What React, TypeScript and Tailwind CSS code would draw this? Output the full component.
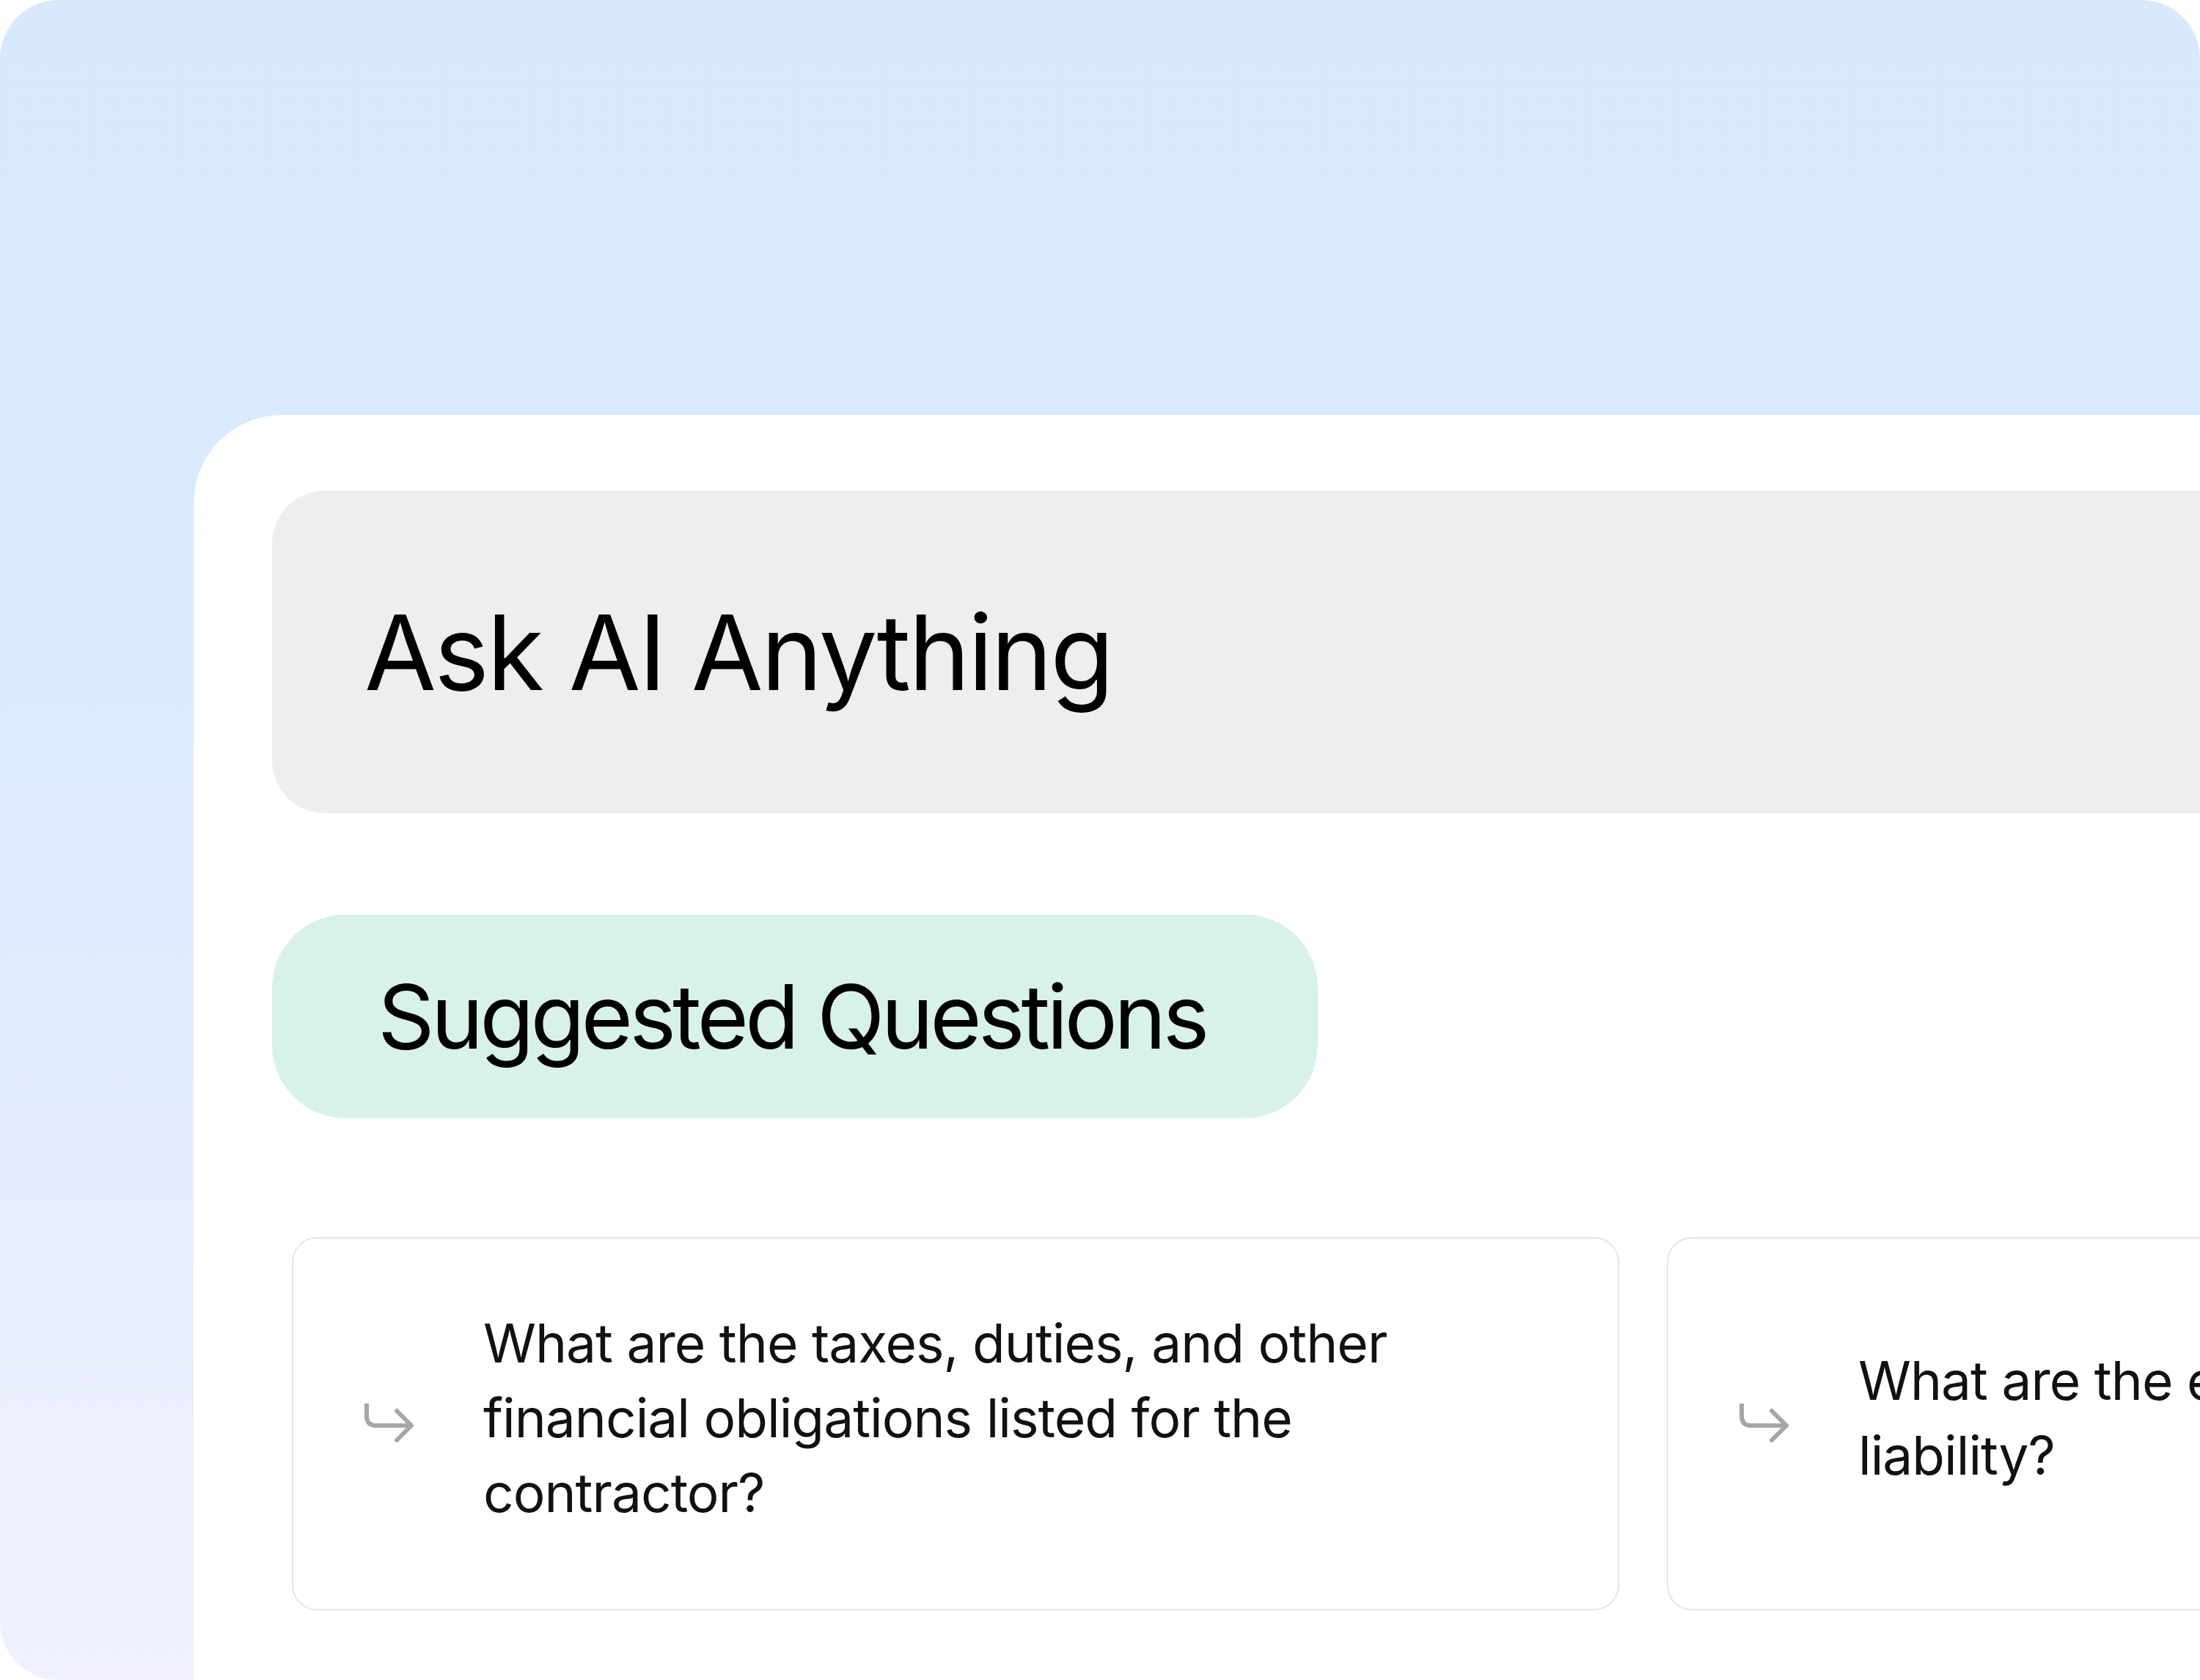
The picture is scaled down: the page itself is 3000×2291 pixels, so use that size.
import type { ReactNode } from "react";

const ReplyArrow = () => (
  <svg
    viewBox="0 0 70 56"
    className="w-[70px] h-[56px] shrink-0"
    fill="none"
    stroke="#a6a6a6"
    strokeWidth={6}
    strokeLinecap="round"
    strokeLinejoin="round"
  >
    <path d="M5 1 V17 Q5 30 18 30 H65" />
    <path d="M46 10 L66 30 L46 50" />
  </svg>
);

const QuestionCard = ({ children }: { children: ReactNode }) => (
  <div className="w-[1810px] h-[509px] shrink-0 rounded-[34px] border-2 border-[#e6e6e8] bg-white flex items-center pl-[95px] pr-[80px]">
    <ReplyArrow />
    <p className="ml-[94px] pb-[16px] max-w-[1400px] text-[73px] leading-[102px] tracking-[-1px] text-[#111111]">
      {children}
    </p>
  </div>
);

export default function App() {
  return (
    <div className="w-[3000px] h-[2291px] bg-white font-['Inter',sans-serif]">
      <div className="w-full h-full rounded-[80px] overflow-hidden bg-[linear-gradient(180deg,#d8e9fd_0%,#d9eafd_35%,#f0f0fe_100%)] pl-[264px] pt-[566px] flex">
        <div className="flex-1 bg-white rounded-tl-[120px] pl-[107px] pt-[103px] flex flex-col overflow-hidden">
          <div className="h-[440px] rounded-l-[72px] bg-[#eeeeee] flex items-center pl-[126px]">
            <h1 className="text-[142px] leading-none font-normal text-black tracking-[-3px]">
              Ask AI Anything
            </h1>
          </div>

          <div className="mt-[138px] w-[1426px] h-[278px] rounded-[100px] bg-[#d9f2e8] flex items-center pl-[144px]">
            <h2 className="text-[121px] leading-none font-normal text-black tracking-[-5px]">
              Suggested Questions
            </h2>
          </div>

          <div className="mt-[162px] ml-[27px] flex gap-[65px]">
            <QuestionCard>
              What are the taxes, duties, and other financial obligations listed for the contractor?
            </QuestionCard>
            <QuestionCard>What are the exclusions to limitation of liability?</QuestionCard>
          </div>
        </div>
      </div>
    </div>
  );
}
